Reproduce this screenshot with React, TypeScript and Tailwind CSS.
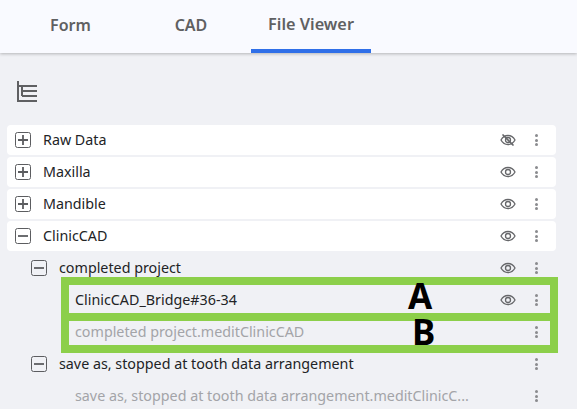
const font = { fontFamily: '"Noto Sans", sans-serif' };

function TreeIcon() {
  return (
    <svg width="21" height="21" viewBox="0 0 21 21" fill="none" stroke="#5f6062" strokeWidth="2">
      <path d="M1 0v20h19M1 5h19M5 10h15M5 15h15M5 5v10" />
    </svg>
  );
}

function Toggle({ open }: { open?: boolean }) {
  return (
    <svg width="16" height="16" viewBox="0 0 16 16" fill="none" className="shrink-0" stroke="#5c5d60">
      <rect x="0.5" y="0.5" width="15" height="15" rx="2" />
      <path d={open ? "M3 8h10" : "M3 8h10M8 3v10"} strokeWidth="1.8" />
    </svg>
  );
}

function Eye({ off }: { off?: boolean }) {
  return (
    <svg width="16" height="12" viewBox="0 0 16 12" fill="none" stroke="#66676a" strokeWidth="1.300">
      <path d="M1 6c1.600-3 4-4.500 7-4.500S13.400 3 15 6c-1.600 3-4 4.500-7 4.500S2.600 9 1 6z" />
      <circle cx="8" cy="6" r="2.500" />
      {off && <path d="M2.500 0.500l11 11" strokeWidth="1.600" />}
    </svg>
  );
}

function Dots() {
  return (
    <div className="flex w-[3px] flex-col gap-[1.500px]">
      <span className="h-[3px] w-[3px] rounded-full bg-[#8a8b8e]" />
      <span className="h-[3px] w-[3px] rounded-full bg-[#8a8b8e]" />
      <span className="h-[3px] w-[3px] rounded-full bg-[#8a8b8e]" />
    </div>
  );
}

type RowProps = {
  label: string;
  card?: boolean;
  indent?: string;
  open?: boolean;
  toggle?: boolean;
  muted?: boolean;
  eye?: boolean;
  eyeOff?: boolean;
};

function Row({ label, card, indent = "pl-2", open, toggle = true, muted, eye = true, eyeOff }: RowProps) {
  return (
    <div className={`flex h-[30px] items-center pr-[18px] ${indent} ${card ? "rounded-[4px] bg-white" : ""}`}>
      {toggle && <Toggle open={open} />}
      <span
        className={`ml-3 mt-[-1px] flex-1 truncate text-[14.300px] ${muted ? "text-[#a3a4a8]" : "text-[#222326]"}`}
      >
        {label}
      </span>
      {eye && <Eye off={eyeOff} />}
      <div className="ml-[19px] flex w-[3px] justify-center">
        <Dots />
      </div>
    </div>
  );
}

export default function App() {
  return (
    <div className="relative h-[409px] w-[577px] overflow-hidden bg-[#f0f1f5]" style={font}>
      <div className="flex h-[53px] bg-[#f9faff] pl-[8px] shadow-[0_1px_3px_rgba(0,0,0,0.25)]">
        <div className="flex w-[125px] items-center justify-center pb-[4px] text-[16px] font-semibold text-[#5f6062]">Form</div>
        <div className="flex w-[116px] items-center justify-center pb-[4px] text-[16px] font-semibold text-[#5f6062]">CAD</div>
        <div className="ml-[2px] flex w-[120px] items-center justify-center border-b-4 border-[#2f6fe8] text-[16.300px] font-semibold text-[#5f6062]">
          File Viewer
        </div>
      </div>

      <div className="pl-[17px] pt-[28px]">
        <TreeIcon />
      </div>

      <div className="mt-[23px] flex flex-col gap-[2px] pl-[7px] pr-[21px]">
        <Row card label="Raw Data" eyeOff />
        <Row card label="Maxilla" />
        <Row card label="Mandible" />
        <Row card open label="ClinicCAD" />
        <Row open indent="pl-[24px]" label="completed project" />
        <Row toggle={false} indent="pl-[56px]" label="ClinicCAD_Bridge#36-34" />
        <Row toggle={false} muted eye={false} indent="pl-[56px]" label="completed project.meditClinicCAD" />
        <Row open eye={false} indent="pl-[24px]" label="save as, stopped at tooth data arrangement" />
        <Row
          toggle={false}
          muted
          eye={false}
          indent="pl-[56px]"
          label="save as, stopped at tooth data arrangement.meditClinicC..."
        />
      </div>

      <div className="absolute left-[61px] top-[277px] h-[76px] w-[497px] border-8 border-[#8ccf4a]">
        <div className="mt-[28px] h-[8px] bg-[#8ccf4a]" />
      </div>
      <span className="absolute left-[408px] top-[281px] text-[35px] font-bold leading-[30px] text-black">A</span>
      <span className="absolute left-[412px] top-[317px] text-[35px] font-bold leading-[30px] text-black">B</span>
    </div>
  );
}
